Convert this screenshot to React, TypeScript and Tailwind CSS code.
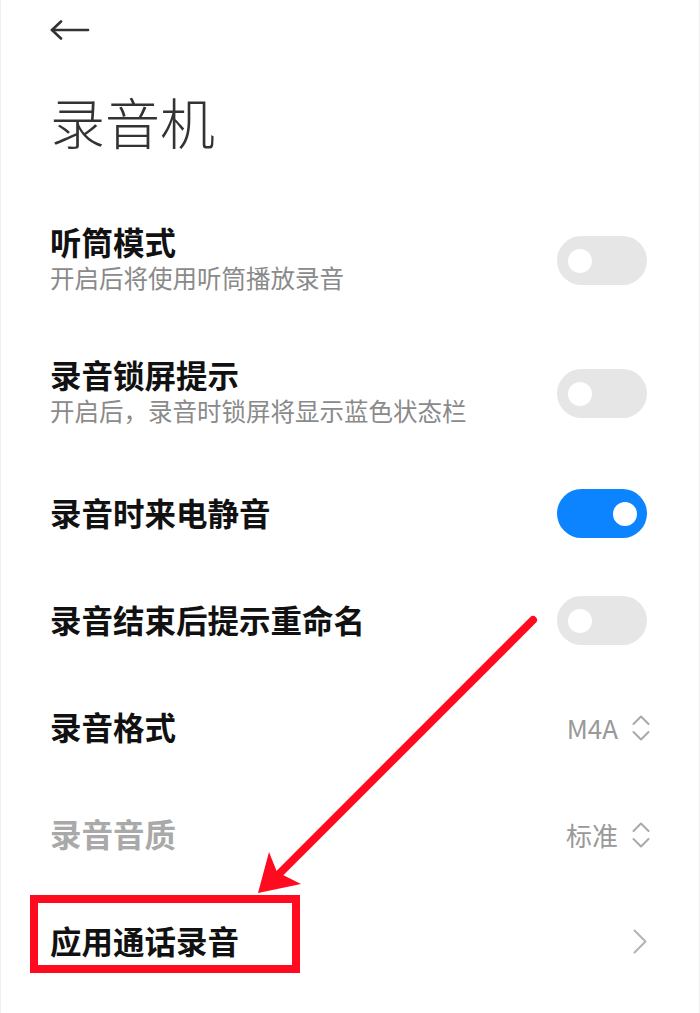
import React from 'react';

type Row =
  | { kind: 'toggle'; title: string; desc?: string; on: boolean }
  | { kind: 'select'; title: string; value: string; disabled?: boolean }
  | { kind: 'link'; title: string };

const rows: Row[] = [
  { kind: 'toggle', title: '听筒模式', desc: '开启后将使用听筒播放录音', on: false },
  { kind: 'toggle', title: '录音锁屏提示', desc: '开启后，录音时锁屏将显示蓝色状态栏', on: false },
  { kind: 'toggle', title: '录音时来电静音', on: true },
  { kind: 'toggle', title: '录音结束后提示重命名', on: false },
  { kind: 'select', title: '录音格式', value: 'M4A' },
  { kind: 'select', title: '录音音质', value: '标准', disabled: true },
  { kind: 'link', title: '应用通话录音' },
];

function Toggle({ on }: { on: boolean }) {
  return (
    <div
      className={`flex h-[49px] w-[90px] shrink-0 items-center rounded-full px-[11px] ${
        on ? 'justify-end bg-[#0d84ff] pr-[10px]' : 'justify-start bg-[#e6e6e6]'
      }`}
    >
      <div className="h-[24px] w-[24px] rounded-full bg-white" />
    </div>
  );
}

function UpDown() {
  return (
    <svg width="18" height="28" viewBox="0 0 18 28" fill="none" stroke="#a8a8a8" strokeWidth="2" strokeLinecap="round" strokeLinejoin="round">
      <polyline points="1.5,10 9,2.5 16.5,10" />
      <polyline points="1.5,18 9,25.5 16.5,18" />
    </svg>
  );
}

function SettingRow({ row }: { row: Row }) {
  const tall = row.kind === 'toggle' && row.desc;
  const muted = row.kind === 'select' && row.disabled;
  return (
    <div className={`flex items-center justify-between pl-[49px] pr-[52px] ${tall ? 'h-[133px]' : 'h-[107px]'}`}>
      <div className="-mt-[3px] flex flex-col">
        <span className={`text-[31.5px] leading-[38px] font-semibold ${muted ? 'text-[#a9a9a9]' : 'text-[#111]'}`}>
          {row.title}
        </span>
        {row.kind === 'toggle' && row.desc && (
          <span className="text-[24.5px] leading-[36px] text-[#8a8a8a]">{row.desc}</span>
        )}
      </div>
      {row.kind === 'toggle' && <Toggle on={row.on} />}
      {row.kind === 'select' && (
        <div className="mr-[-3px] flex items-center gap-[14px]">
          <span className="text-[26px] leading-[32px] text-[#999]">{row.value}</span>
          <UpDown />
        </div>
      )}
      {row.kind === 'link' && (
        <svg width="14" height="25" viewBox="0 0 14 25" fill="none" stroke="#b3b3b3" strokeWidth="2" strokeLinecap="round" strokeLinejoin="round">
          <polyline points="1.5,1.5 12.5,12.5 1.5,23.5" />
        </svg>
      )}
    </div>
  );
}

export default function App() {
  return (
    <div
      className="relative h-[1013px] w-[700px] overflow-hidden border-x border-[#f0f0f0] bg-white"
      style={{ fontFamily: '"Noto Sans CJK SC", "Noto Sans", sans-serif' }}
    >
      {/* header */}
      <div className="pl-[49px] pt-[20px]">
        <svg width="40" height="20" viewBox="0 0 40 20" fill="none" stroke="#333" strokeWidth="2.6" strokeLinecap="round" strokeLinejoin="round">
          <line x1="2" y1="10" x2="38" y2="10" />
          <polyline points="11,1.5 2,10 11,18.5" />
        </svg>
        <h1 className="mt-[48px] mb-[42px] text-[55px] leading-[64px] font-light text-[#333]">录音机</h1>
      </div>

      {rows.map((row) => (
        <SettingRow key={row.title} row={row} />
      ))}

      {/* annotation: arrow and highlight box */}
      <svg className="pointer-events-none absolute inset-0" width="700" height="1013" viewBox="0 0 700 1013">
        <line x1="532" y1="620" x2="276" y2="876" stroke="#ff0a1f" strokeWidth="8" strokeLinecap="round" />
        <polygon points="257,893 268,852 276,872 300,884" fill="#ff0a1f" />
        <rect x="33" y="899" width="262" height="70" fill="none" stroke="#ff0a1f" strokeWidth="8" />
      </svg>
    </div>
  );
}
